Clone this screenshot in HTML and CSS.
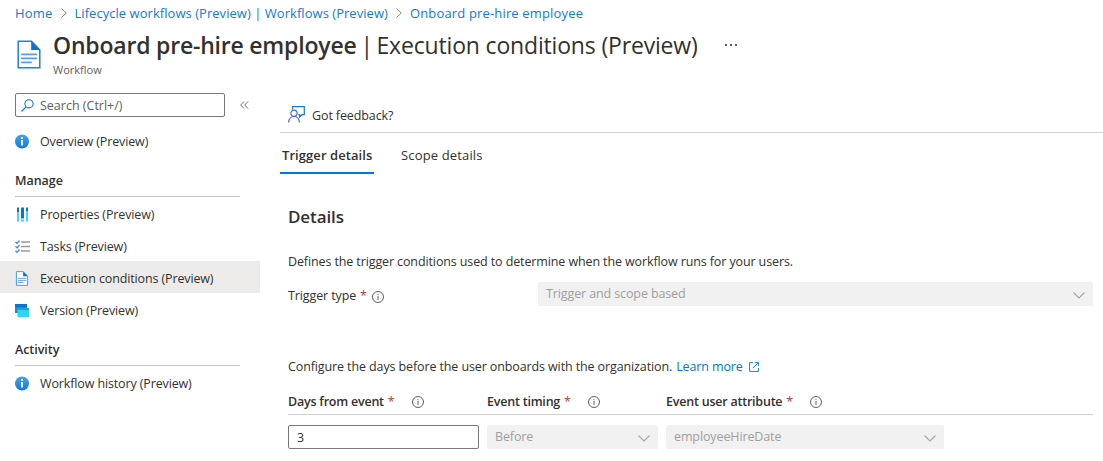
FILE: index.html
```
<!DOCTYPE html>
<html lang="en">
<head>
<meta charset="utf-8">
<title>Onboard pre-hire employee</title>
<link rel="stylesheet" href="styles.css">
</head>
<body>
<svg class="defs" width="0" height="0" aria-hidden="true">
  <defs>
    <linearGradient id="blueball" x1="0" y1="0" x2="0" y2="1"><stop offset="0" stop-color="#4aa3ec"/><stop offset="1" stop-color="#0f7bd8"/></linearGradient>
    <symbol id="doc" viewBox="0 0 24 29">
      <path d="M1.2 1.2h13.3l8.3 8.8v17.8H1.2z" fill="#fff" stroke="#1b82de" stroke-width="1.5"/>
      <path d="M14.2.8L23.4 10h-9.2z" fill="#0b74d1"/>
      <path d="M4.8 14.3h14.6M4.8 18.3h14.6M4.8 22.3h9.4" stroke="#5b9bf0" stroke-width="1.7" stroke-linecap="round"/>
    </symbol>
    <symbol id="ball" viewBox="0 0 14 14">
      <circle cx="7" cy="7" r="7" fill="url(#blueball)"/>
      <circle cx="7" cy="3.5" r="1.05" fill="#fff"/><path d="M6.1 5.6h1.8v5.3H6.1z" fill="#fff"/>
    </symbol>
    <symbol id="info" viewBox="0 0 12 12">
      <circle cx="6" cy="6" r="5.5" fill="none" stroke="#605e5c"/>
      <path d="M6 3v1.1M6 5v4" stroke="#605e5c"/>
    </symbol>
    <symbol id="chev" viewBox="0 0 12 7"><path d="M.5.5L6 6l5.5-5.500" fill="none" stroke="#a3a5a8" stroke-width="1.1"/></symbol>
    <symbol id="crumb" viewBox="0 0 6 10"><path d="M.5.5L5.3 5 .5 9.5" fill="none" stroke="#8a8886"/></symbol>
  </defs>
</svg>

<nav class="breadcrumb">
  <a class="crumb-home">Home</a>
  <svg class="crumb-sep"><use href="#crumb"/></svg>
  <a class="crumb-mid">Lifecycle workflows (Preview) | Workflows (Preview)</a>
  <svg class="crumb-sep"><use href="#crumb"/></svg>
  <a class="crumb-last">Onboard pre-hire employee</a>
</nav>

<header class="page-head">
  <svg class="page-icon"><use href="#doc"/></svg>
  <div class="titles">
    <h1 class="title"><span class="title-name">Onboard pre-hire employee</span><span class="title-sep">|</span><span class="title-page">Execution conditions (Preview)</span>
      <svg class="more" viewBox="0 0 12 2"><path d="M0 0h2v2H0zM5 0h2v2H5zM10 0h2v2h-2z" fill="#605e5c"/></svg></h1>
    <div class="subtitle">Workflow</div>
  </div>
</header>

<div class="columns">
  <aside class="sidebar">
    <div class="search-row">
      <div class="search">
        <svg class="search-icon" viewBox="0 0 13 13"><circle cx="8" cy="4.8" r="4.1" fill="none" stroke="#0f7ad6" stroke-width="1.1"/><path d="M5.1 7.8L.5 12.5" stroke="#0f7ad6" stroke-width="1.2"/></svg>
        <span class="search-text">Search (Ctrl+/)</span>
      </div>
      <svg class="collapse" viewBox="0 0 9 8"><path d="M4 .5L.7 4 4 7.5M8 .5L4.7 4 8 7.5" fill="none" stroke="#605e5c" stroke-width=".9"/></svg>
    </div>
    <a class="item overview"><svg class="nav-icon"><use href="#ball"/></svg><span>Overview (Preview)</span></a>
    <h2 class="group">Manage</h2>
    <a class="item"><svg class="nav-icon" viewBox="0 0 14 14"><path d="M2 0h2v5H2zM6 0h3v11H6zM11 0h2v4h-2z" fill="#0c74cf"/><path d="M2 5h2v9H2zM6 12h3v2H6zM11 4h2v10h-2z" fill="#43d8f5"/></svg><span>Properties (Preview)</span></a>
    <a class="item"><svg class="nav-icon wide" viewBox="0 0 15 14"><path d="M.5 2.3L2 3.8 4.5 1M.5 6.8L2 8.3l2.500-2.800M.5 11.300L2 12.800l2.500-2.800" fill="none" stroke="#2b88d8" stroke-width="1.200"/><path d="M6 2.500h9M6 7h9M6 11.500h9" stroke="#9a9a9a" stroke-width="1.300"/></svg><span>Tasks (Preview)</span></a>
    <a class="item selected"><svg class="nav-icon"><use href="#doc"/></svg><span>Execution conditions (Preview)</span></a>
    <a class="item"><svg class="nav-icon" viewBox="0 0 14 14"><path d="M0 .5h12v9H0z" fill="#0b74d1"/><path d="M0 3.500h12v6H0z" fill="#1989dc"/><path d="M2.500 4.500H14v9H2.500z" fill="#32d4f5"/><path d="M2.500 4.500H14v2H2.500z" fill="#1fa5c8"/></svg><span>Version (Preview)</span></a>
    <h2 class="group activity">Activity</h2>
    <a class="item"><svg class="nav-icon"><use href="#ball"/></svg><span>Workflow history (Preview)</span></a>
  </aside>

  <main class="main">
    <div class="commands">
      <svg class="feedback" viewBox="0 0 17 17"><path d="M4.500 3.500V.6h11.800v8.100h-2.100l-2.500 2.300V8.700h-1.400" fill="none" stroke="#1379d4" stroke-width="1.200"/><circle cx="6" cy="7.300" r="3.100" fill="none" stroke="#4b62d8" stroke-width="1.200"/><path d="M.6 16.500c.3-3.700 2.400-6 5.400-6s5.100 2.300 5.400 6" fill="none" stroke="#4b62d8" stroke-width="1.200"/></svg>
      <span>Got feedback?</span>
    </div>
    <div class="tabs">
      <a class="tab active">Trigger details</a>
      <a class="tab">Scope details</a>
    </div>
    <section class="details">
      <h3 class="heading">Details</h3>
      <p class="para first">Defines the trigger conditions used to determine when the workflow runs for your users.</p>
      <div class="trigger-row">
        <label class="trigger-label"><span>Trigger type</span><b class="star">*</b><svg class="info"><use href="#info"/></svg></label>
        <div class="select"><span>Trigger and scope based</span><svg class="chev"><use href="#chev"/></svg></div>
      </div>
      <p class="para second"><span>Configure the days before the user onboards with the organization.</span> <a class="learn">Learn more</a>
        <svg class="external" viewBox="0 0 10 10"><path d="M4 .6H.6v8.800h8.800V6M5.800.6h3.600v3.600M9.400.6L3.800 6.200" fill="none" stroke="#1a7fd9" stroke-width="1"/></svg></p>
      <div class="grid heads">
        <div class="head"><span>Days from event</span><b class="star">*</b><svg class="info"><use href="#info"/></svg></div>
        <div class="head"><span>Event timing</span><b class="star">*</b><svg class="info"><use href="#info"/></svg></div>
        <div class="head"><span>Event user attribute</span><b class="star">*</b><svg class="info"><use href="#info"/></svg></div>
      </div>
      <div class="grid fields">
        <div class="input">3</div>
        <div class="select"><span>Before</span><svg class="chev"><use href="#chev"/></svg></div>
        <div class="select"><span>employeeHireDate</span><svg class="chev"><use href="#chev"/></svg></div>
      </div>
    </section>
  </main>
</div>
</body>
</html>
```
FILE: styles.css
```
* { box-sizing: border-box; }
body { margin: 0; width: 1103px; height: 461px; overflow: hidden; background: #fff; color: #323130; font: 12.5px/18px "Open Sans", "Noto Sans", sans-serif; letter-spacing: -0.115px; }
svg { display: block; flex: none; }
span, a { white-space: nowrap; }
h1, h2, h3, p { margin: 0; font-weight: 400; }
.defs { position: absolute; }

.breadcrumb { display: flex; align-items: center; height: 26px; padding: 0 0 1px 15px; color: #0f7ad6; font-size: 13px; letter-spacing: 0.04px; }
.crumb-home { letter-spacing: 0.2px; }
.crumb-last { letter-spacing: 0.16px; }
.crumb-sep { width: 6px; height: 10px; margin: 1px 8px 0; }

.page-head { display: flex; height: 67px; padding-left: 17px; }
.page-icon { width: 24px; height: 29px; margin: 14px 12px 0 0; }
.title { display: flex; align-items: center; height: 34px; margin-top: 2px; font-size: 23px; line-height: 34px; letter-spacing: -0.17px; }
.title-name { font-weight: 600; letter-spacing: -0.2px; }
.title-sep { margin: 0 3.5px 0 4px; }
.more { width: 12px; height: 2px; margin-left: 27px; }
.subtitle { margin-top: 1px; font-size: 11px; line-height: 14px; letter-spacing: 0; color: #605e5c; }

.columns { display: flex; }
.sidebar { width: 260px; }
.search-row { display: flex; align-items: center; height: 24px; margin-bottom: 8px; padding-left: 15px; }
.search { display: flex; align-items: center; gap: 6px; width: 210px; height: 24px; padding-left: 5px; border: 1px solid #7a7876; border-radius: 2px; color: #605e5c; letter-spacing: 0; }
.search-text { padding-top: 2px; }
.search-icon { width: 13px; height: 13px; }
.collapse { width: 9px; height: 8px; margin-left: 15px; }
.item { display: flex; align-items: center; gap: 11px; height: 32px; padding: 2px 0 0 15px; letter-spacing: -0.13px; }
.item.overview { padding-top: 0; }
.item span { padding-top: 1px; }
.nav-icon { width: 14px; height: 15px; }
.nav-icon.wide { width: 15px; margin-right: -1px; }
.selected { background: #edebe9; }
.group { height: 32px; margin: 8px 20px 0 15px; padding-top: 7px; border-bottom: 1px solid #c8c6c4; font-size: 12.5px; font-weight: 600; letter-spacing: -0.05px; }
.group.activity { height: 33px; padding-top: 8px; }

.main { flex: 1; padding-left: 20px; }
.commands { display: flex; align-items: center; gap: 7px; height: 40px; padding: 7px 0 0 8px; border-bottom: 1px solid #d2d0ce; }
.feedback { width: 17px; height: 17px; margin-top: -4px; }
.tabs { display: flex; gap: 25px; height: 41px; }
.tab { display: flex; align-items: center; padding: 3px 2px 0; font-size: 13px; letter-spacing: 0.15px; }
.tab.active { width: 94px; border-bottom: 2px solid #0078d4; padding-top: 5px; font-weight: 600; letter-spacing: 0.07px; }
.details { padding: 0 10px 0 8px; }
.heading { padding-top: 31px; font-size: 17px; line-height: 24px; font-weight: 600; }
.para.first { margin-top: 24px; }
.trigger-row { display: flex; justify-content: space-between; margin-top: 11px; }
.trigger-label { display: flex; align-items: center; height: 28px; }
.trigger-label .info { margin-top: 1px; }
.trigger-row .select { width: 555px; }
.star { margin-left: 4px; color: #a4424a; font-weight: 400; }
.info { width: 12px; height: 12px; margin-left: 5px; }
.select { display: flex; align-items: center; justify-content: space-between; height: 24px; padding: 0 8px; border-radius: 2px; background: #f1f1f1; color: #a19f9d; }
.chev { width: 12px; height: 7px; margin-top: 2px; }
.para.second { display: flex; align-items: center; height: 18px; margin-top: 48px; }
.learn { margin-left: 4px; color: #0078d4; }
.external { width: 10px; height: 10px; margin-left: 6px; }
.grid { display: grid; grid-template-columns: 191px 171px 278px; gap: 8px; }
.heads { height: 39px; padding-top: 17px; border-bottom: 1px solid #d2d0ce; }
.head { display: flex; align-items: center; height: 18px; font-weight: 600; letter-spacing: -0.22px; }
.head .info { margin-left: 17px; }
.fields { margin-top: 10px; }
.input { height: 24px; padding: 3px 8px 0; border: 1px solid #7a7876; border-radius: 2px; }
```
